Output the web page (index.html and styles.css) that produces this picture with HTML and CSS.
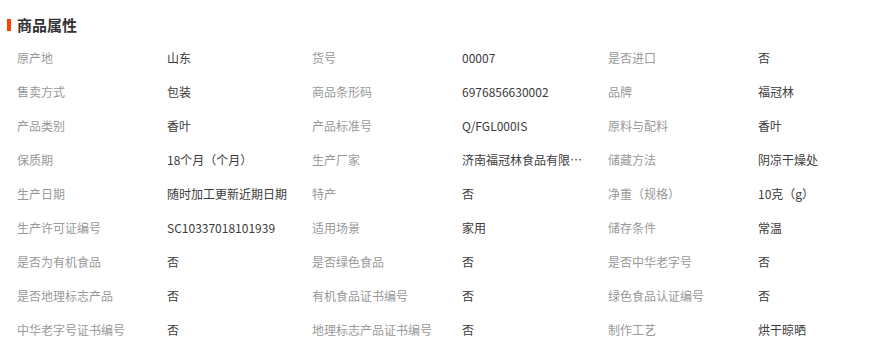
FILE: index.html
```html
<!DOCTYPE html>
<html lang="zh-CN">
<head>
<meta charset="utf-8">
<title>商品属性</title>
<link rel="stylesheet" href="styles.css">
</head>
<body>
<div class="panel">
  <h2 class="title">商品属性</h2>
  <div class="attrs">
    <div class="k">原产地</div><div class="v">山东</div>
    <div class="k">货号</div><div class="v">00007</div>
    <div class="k">是否进口</div><div class="v">否</div>

    <div class="k">售卖方式</div><div class="v">包装</div>
    <div class="k">商品条形码</div><div class="v">6976856630002</div>
    <div class="k">品牌</div><div class="v">福冠林</div>

    <div class="k">产品类别</div><div class="v">香叶</div>
    <div class="k">产品标准号</div><div class="v">Q/FGL000IS</div>
    <div class="k">原料与配料</div><div class="v">香叶</div>

    <div class="k">保质期</div><div class="v">18个月（个月）</div>
    <div class="k">生产厂家</div><div class="v">济南福冠林食品有限公司</div>
    <div class="k">储藏方法</div><div class="v">阴凉干燥处</div>

    <div class="k">生产日期</div><div class="v">随时加工更新近期日期</div>
    <div class="k">特产</div><div class="v">否</div>
    <div class="k">净重（规格）</div><div class="v">10克（g）</div>

    <div class="k">生产许可证编号</div><div class="v">SC10337018101939</div>
    <div class="k">适用场景</div><div class="v">家用</div>
    <div class="k">储存条件</div><div class="v">常温</div>

    <div class="k">是否为有机食品</div><div class="v">否</div>
    <div class="k">是否绿色食品</div><div class="v">否</div>
    <div class="k">是否中华老字号</div><div class="v">否</div>

    <div class="k">是否地理标志产品</div><div class="v">否</div>
    <div class="k">有机食品证书编号</div><div class="v">否</div>
    <div class="k">绿色食品认证编号</div><div class="v">否</div>

    <div class="k">中华老字号证书编号</div><div class="v">否</div>
    <div class="k">地理标志产品证书编号</div><div class="v">否</div>
    <div class="k">制作工艺</div><div class="v">烘干晾晒</div>
  </div>
</div>
</body>
</html>
```
FILE: styles.css
```css
html, body {
  margin: 0;
  padding: 0;
  background: #fff;
}
body {
  font-family: "Noto Sans CJK SC", "Microsoft YaHei", sans-serif;
  font-size: 12px;
  color: #333;
}
.panel {
  padding: 14px 0 0 7px;
}
.title {
  margin: 0 0 6px 0;
  font-size: 15px;
  font-weight: bold;
  line-height: 21px;
  color: #333;
  display: flex;
  align-items: center;
}
.title::before {
  content: "";
  display: block;
  width: 4px;
  height: 12px;
  background: #ff4400;
  margin-right: 6px;
}
.attrs {
  display: grid;
  grid-template-columns: 150px 145px 150px 146px 150px 1fr;
  grid-auto-rows: 34px;
  padding-left: 10px;
}
.k, .v {
  line-height: 34px;
  white-space: nowrap;
  overflow: hidden;
  text-overflow: ellipsis;
}
.k {
  color: #999;
  padding-right: 10px;
}
.v {
  color: #3c3c3c;
  padding-right: 20px;
}
```
